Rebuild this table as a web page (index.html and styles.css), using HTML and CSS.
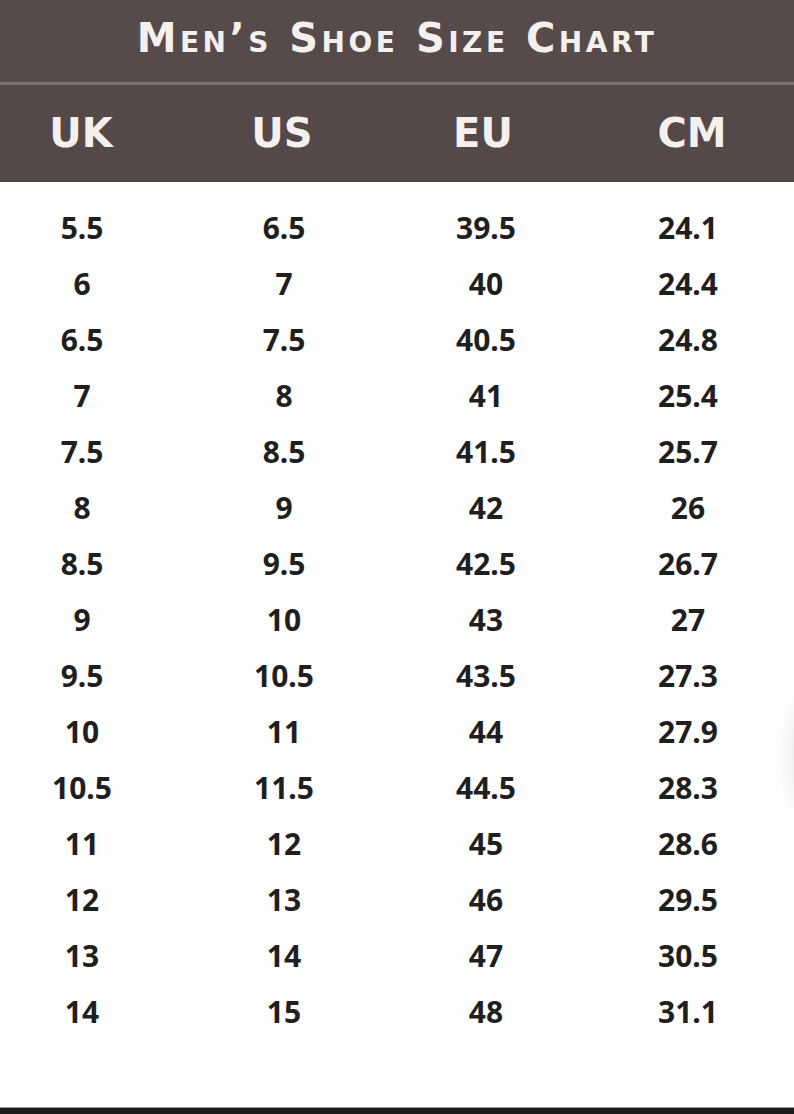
FILE: index.html
```html
<!DOCTYPE html>
<html lang="en">
<head>
<meta charset="utf-8">
<title>Men's Shoe Size Chart</title>
<link rel="stylesheet" href="styles.css">
</head>
<body>
<div class="chart">
  <div class="title">Men’s Shoe Size Chart</div>
  <div class="divider"></div>
  <div class="head grid">
    <div>UK</div><div>US</div><div>EU</div><div>CM</div>
  </div>
  <div class="rows">
    <div class="grid row"><div>5.5</div><div>6.5</div><div>39.5</div><div>24.1</div></div>
    <div class="grid row"><div>6</div><div>7</div><div>40</div><div>24.4</div></div>
    <div class="grid row"><div>6.5</div><div>7.5</div><div>40.5</div><div>24.8</div></div>
    <div class="grid row"><div>7</div><div>8</div><div>41</div><div>25.4</div></div>
    <div class="grid row"><div>7.5</div><div>8.5</div><div>41.5</div><div>25.7</div></div>
    <div class="grid row"><div>8</div><div>9</div><div>42</div><div>26</div></div>
    <div class="grid row"><div>8.5</div><div>9.5</div><div>42.5</div><div>26.7</div></div>
    <div class="grid row"><div>9</div><div>10</div><div>43</div><div>27</div></div>
    <div class="grid row"><div>9.5</div><div>10.5</div><div>43.5</div><div>27.3</div></div>
    <div class="grid row"><div>10</div><div>11</div><div>44</div><div>27.9</div></div>
    <div class="grid row"><div>10.5</div><div>11.5</div><div>44.5</div><div>28.3</div></div>
    <div class="grid row"><div>11</div><div>12</div><div>45</div><div>28.6</div></div>
    <div class="grid row"><div>12</div><div>13</div><div>46</div><div>29.5</div></div>
    <div class="grid row"><div>13</div><div>14</div><div>47</div><div>30.5</div></div>
    <div class="grid row"><div>14</div><div>15</div><div>48</div><div>31.1</div></div>
  </div>
  <div class="spacer"></div>
  <div class="footer"></div>
  <div class="edge-shadow"></div>
</div>
</body>
</html>
```
FILE: styles.css
```css
html, body {
  margin: 0;
  padding: 0;
  background: #ffffff;
}
body {
  width: 794px;
  height: 1114px;
  overflow: hidden;
}
.chart {
  position: relative;
  width: 794px;
  height: 1114px;
  overflow: hidden;
  display: flex;
  flex-direction: column;
  background: #fefefe;
}
.title {
  height: 82px;
  background: #564a4a;
  color: #f4f0ee;
  display: flex;
  align-items: center;
  justify-content: center;
  font-family: "DejaVu Sans", "Lato", sans-serif;
  font-weight: 700;
  font-size: 40px;
  font-variant: small-caps;
  letter-spacing: 3.5px;
  padding-bottom: 6px;
  box-sizing: border-box;
}
.divider {
  height: 3px;
  background: #7c7272;
}
.grid {
  display: grid;
  grid-template-columns: repeat(4, 202px);
  margin-left: -19px;
  text-align: center;
}
.head {
  height: 97px;
  background: #544848;
  color: #f4f0ee;
  align-items: center;
  font-family: "DejaVu Sans", "Lato", sans-serif;
  font-weight: 700;
  font-size: 40px;
  padding-bottom: 2px;
  box-sizing: border-box;
  margin-left: 0;
  grid-template-columns: 162px 240px 162px 256px;
}
.rows {
  padding-top: 17px;
  display: flex;
  flex-direction: column;
}
.row {
  height: 56px;
  align-items: center;
  font-family: "Noto Sans", "Open Sans", sans-serif;
  font-weight: 700;
  font-size: 30px;
  color: #1f1f1f;
}
.spacer {
  flex: 1;
}
.footer {
  height: 6px;
  background: #1c1c1c;
  border-top: 1px solid #9a9a9a;
}
.edge-shadow {
  position: absolute;
  right: -28px;
  top: 690px;
  width: 44px;
  height: 130px;
  border-radius: 50%;
  background: radial-gradient(closest-side, rgba(0,0,0,0.08), rgba(0,0,0,0));
}
```
